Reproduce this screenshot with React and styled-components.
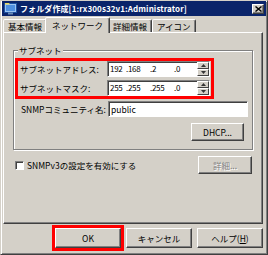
import React from 'react';
import styled, { createGlobalStyle } from 'styled-components';

const GlobalStyle = createGlobalStyle`
  html, body {
    margin: 0;
    padding: 0;
    background: #d4d0c8;
  }
  * {
    box-sizing: border-box;
  }
`;

const Window = styled.div`
  width: 268px;
  height: 255px;
  background: #d4d0c8;
  border: 1px solid;
  border-color: #d4d0c8 #404040 #404040 #d4d0c8;
  box-shadow: inset 1px 1px #fff, inset -1px -1px #808080;
  display: flex;
  flex-direction: column;
  font-family: "Noto Sans CJK JP", "Liberation Sans", sans-serif;
  font-size: 8.5px;
  line-height: 12px;
  color: #000;
`;

const TitleBar = styled.div`
  height: 15px;
  margin: 0 1px;
  background: #0a246a;
  display: flex;
  align-items: center;
  padding: 0 2px 0 2px;
  gap: 3px;
`;

const TitleText = styled.div`
  flex: 1;
  color: #fff;
  font-weight: bold;
  font-size: 8px;
  letter-spacing: 0.1px;
  white-space: nowrap;
  overflow: hidden;
`;

const CloseButton = styled.div`
  width: 12px;
  height: 10px;
  background: #d4d0c8;
  border: 1px solid;
  border-color: #fff #404040 #404040 #fff;
  box-shadow: inset -1px -1px #808080;
  display: flex;
  align-items: center;
  justify-content: center;
`;

const Body = styled.div`
  flex: 1;
  display: flex;
  flex-direction: column;
  padding: 0 4px 6px 2px;
`;

const TabStrip = styled.div`
  height: 16px;
  display: flex;
  align-items: flex-end;
  position: relative;
  z-index: 1;
`;

const Tab = styled.div`
  height: ${p => (p.$active ? '16px' : '13px')};
  margin: ${p => (p.$active ? '0 -2px -1px' : '0')};
  padding: ${p => (p.$active ? '1px 6px 0' : '0 4px')};
  background: #d4d0c8;
  border: 1px solid;
  border-bottom: none;
  border-color: #fff #404040 transparent #fff;
  box-shadow: inset -1px 0 #808080;
  border-radius: 2px 2px 0 0;
  white-space: nowrap;
  position: relative;
  z-index: ${p => (p.$active ? 2 : 0)};
`;

const Panel = styled.div`
  flex: 1;
  display: flex;
  flex-direction: column;
  border: 1px solid;
  border-color: #fff #404040 #404040 #fff;
  box-shadow: inset -1px -1px #808080;
  padding: 17px 9px 0 9px;
`;

const Group = styled.div`
  position: relative;
  border: 1px solid #808080;
  box-shadow: inset 1px 1px #fff, 1px 1px #fff;
  padding: 7px 0 8px 1px;
  display: flex;
  flex-direction: column;
`;

const Legend = styled.div`
  position: absolute;
  top: -7px;
  left: 4px;
  padding: 0 1px;
  background: #d4d0c8;
`;

const Highlight = styled.div`
  width: 199px;
  border: 3px solid #ff0000;
  display: flex;
  flex-direction: column;
  gap: 3px;
`;

const Row = styled.div`
  height: 16px;
  display: flex;
  align-items: center;
  padding-left: ${p => p.$indent || 2}px;
  margin-top: ${p => p.$top || 0}px;
`;

const Label = styled.div`
  width: 87px;
  white-space: nowrap;
`;

const Field = styled.div`
  width: ${p => p.$width}px;
  height: 16px;
  background: #fff;
  border: 1px solid;
  border-color: #808080 #fff #fff #808080;
  box-shadow: inset 1px 1px #404040;
  display: flex;
  align-items: center;
  padding-left: 2px;
`;

const Octet = styled.span`
  flex: none;
  width: ${p => p.$width}px;
  white-space: pre;
  font-size: 8px;
  letter-spacing: -0.3px;
`;

const Spinner = styled.div`
  margin-left: auto;
  width: 12px;
  height: 14px;
  display: flex;
  flex-direction: column;
`;

const SpinHalf = styled.div`
  flex: 1;
  background: #d4d0c8;
  border: 1px solid;
  border-color: #fff #404040 #404040 #fff;
  display: flex;
  align-items: center;
  justify-content: center;
`;

const Button = styled.div`
  width: ${p => p.$width}px;
  height: ${p => p.$height || 18}px;
  background: #d4d0c8;
  border: 1px solid;
  border-color: #fff #404040 #404040 #fff;
  box-shadow: inset -1px -1px #808080;
  display: flex;
  align-items: center;
  justify-content: center;
  white-space: nowrap;
  color: ${p => (p.$disabled ? '#808080' : '#000')};
  text-shadow: ${p => (p.$disabled ? '1px 1px #fff' : 'none')};
  outline: ${p => (p.$marked ? '3px solid #ff0000' : 'none')};
`;

const ButtonRow = styled.div`
  display: flex;
  justify-content: flex-end;
  align-items: center;
  gap: 5px;
  margin-top: ${p => p.$top || 0}px;
  margin-left: ${p => (p.$push ? 'auto' : '0')};
  padding-right: ${p => p.$right || 0}px;
`;

const CheckRow = styled.div`
  display: flex;
  align-items: center;
  margin-top: 6px;
  padding: 0 1px 0 2px;
`;

const CheckBox = styled.div`
  width: 9px;
  height: 9px;
  background: #fff;
  border: 1px solid;
  border-color: #808080 #fff #fff #808080;
  box-shadow: inset 1px 1px #404040;
  margin-right: 3px;
`;

const Mnemonic = styled.span`
  text-decoration: underline;
`;

function AppIcon() {
  return (
    <svg width="13" height="13" viewBox="0 0 13 13">
      <rect x="0.5" y="1.5" width="12" height="9" fill="#9cc4f0" stroke="#1c4fa0" />
      <rect x="2" y="3" width="9" height="6" fill="#4f8fe0" />
      <path d="M1 1 L5 1 L6 2.5 L1 2.5 Z" fill="#e8d860" />
      <rect x="4" y="10.5" width="5" height="2" fill="#6a8cb8" />
    </svg>
  );
}

function CloseGlyph() {
  return (
    <svg width="7" height="6" viewBox="0 0 7 6">
      <path d="M0.5 0.5 L6.5 5.5 M6.5 0.5 L0.5 5.5" stroke="#000" strokeWidth="1.4" />
    </svg>
  );
}

function Arrow({ up }) {
  return (
    <svg width="5" height="3" viewBox="0 0 5 3">
      <path d={up ? 'M2.5 0 L5 3 L0 3 Z' : 'M0 0 L5 0 L2.5 3 Z'} fill="#333" />
    </svg>
  );
}

function IpField({ octets }) {
  return (
    <Field $width={103}>
      <Octet $width={16}>{octets[0]}</Octet>
      <Octet $width={24}>{'.' + octets[1]}</Octet>
      <Octet $width={24}>{'.' + octets[2]}</Octet>
      <Octet $width={20}>{'.' + octets[3]}</Octet>
      <Spinner>
        <SpinHalf><Arrow up /></SpinHalf>
        <SpinHalf><Arrow /></SpinHalf>
      </Spinner>
    </Field>
  );
}

export default function App() {
  return (
    <Window>
      <GlobalStyle />
      <TitleBar>
        <AppIcon />
        <TitleText>フォルダ作成[1:rx300s32v1:Administrator]</TitleText>
        <CloseButton><CloseGlyph /></CloseButton>
      </TitleBar>
      <Body>
        <TabStrip>
          <Tab>基本情報</Tab>
          <Tab $active>ネットワーク</Tab>
          <Tab>詳細情報</Tab>
          <Tab>アイコン</Tab>
        </TabStrip>
        <Panel>
          <Group>
            <Legend>サブネット</Legend>
            <Highlight>
              <Row>
                <Label>サブネットアドレス:</Label>
                <IpField octets={['192', '168', '2', '0']} />
              </Row>
              <Row>
                <Label>サブネットマスク:</Label>
                <IpField octets={['255', '255', '255', '0']} />
              </Row>
            </Highlight>
            <Row $indent={6} $top={2}>
              <Label>SNMPコミュニティ名:</Label>
              <Field $width={140}>public</Field>
            </Row>
            <ButtonRow $top={6} $right={8}>
              <Button $width={53}>DHCP...</Button>
            </ButtonRow>
          </Group>
          <CheckRow>
            <CheckBox />
            <span>SNMPv3の設定を有効にする</span>
            <ButtonRow $push>
              <Button $width={54} $disabled>詳細...</Button>
            </ButtonRow>
          </CheckRow>
        </Panel>
        <ButtonRow $top={4}>
          <Button $width={66} $height={20} $marked>OK</Button>
          <Button $width={66} $height={20}>キャンセル</Button>
          <Button $width={66} $height={20}>ヘルプ(<Mnemonic>H</Mnemonic>)</Button>
        </ButtonRow>
      </Body>
    </Window>
  );
}
